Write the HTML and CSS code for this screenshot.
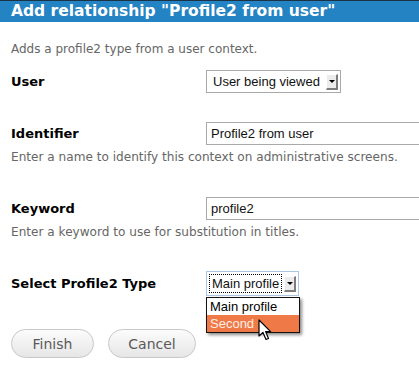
FILE: index.html
```html
<!DOCTYPE html>
<html>
<head>
<meta charset="utf-8">
<link rel="stylesheet" href="styles.css">
</head>
<body>
<div class="dialog">
  <h1 class="title">Add relationship "Profile2 from user"</h1>
  <div class="content">
    <p class="intro">Adds a profile2 type from a user context.</p>

    <div class="item item-user">
      <div class="row">
        <label class="label">User</label>
        <div class="select">
          <span class="select-text">User being viewed</span>
          <span class="arrow"></span>
        </div>
      </div>
    </div>

    <div class="item item-identifier">
      <div class="row">
        <label class="label">Identifier</label>
        <div class="textfield">Profile2 from user</div>
      </div>
      <p class="desc">Enter a name to identify this context on administrative screens.</p>
    </div>

    <div class="item item-keyword">
      <div class="row">
        <label class="label">Keyword</label>
        <div class="textfield">profile2</div>
      </div>
      <p class="desc">Enter a keyword to use for substitution in titles.</p>
    </div>

    <div class="item item-type">
      <div class="row">
        <label class="label">Select Profile2 Type</label>
        <div class="select-wrap">
          <div class="select select-focus">
            <span class="select-text"><span class="focus-ring">Main profile</span></span>
            <span class="arrow"></span>
          </div>
          <ul class="dropdown">
            <li class="option">Main profile</li>
            <li class="option option-hover">Second</li>
          </ul>
          <svg class="cursor" width="14" height="22" viewBox="0 0 14 22">
            <path d="M1 1 L1 17 L5 13.5 L8 20.5 L10.5 19.5 L7.6 12.6 L12.6 12.6 Z" fill="#fff" stroke="#000" stroke-width="1.2" stroke-linejoin="round"/>
          </svg>
        </div>
      </div>
    </div>

    <div class="actions">
      <button class="btn btn-finish">Finish</button>
      <button class="btn btn-cancel">Cancel</button>
    </div>
  </div>
</div>
</body>
</html>
```

FILE: styles.css
```css
html, body {
  margin: 0;
  padding: 0;
  background: #fff;
}
body {
  font-family: "DejaVu Sans", sans-serif;
  width: 419px;
  height: 375px;
  overflow: hidden;
}
.title {
  margin: 0;
  height: 21px;
  border-top: 1px solid #1c3346;
  background: #2383c3;
  color: #fff;
  font-family: "DejaVu Sans", sans-serif;
  font-weight: bold;
  font-size: 15.5px;
  line-height: 21px;
  padding-left: 11px;
  white-space: nowrap;
}
.content {
  padding-left: 11px;
}
.intro {
  margin: 0;
  padding-top: 20px;
  height: 14px;
  line-height: 14px;
  font-size: 12px;
  color: #666;
}
.item {
  margin: 0;
}
.row {
  display: flex;
  align-items: center;
}
.label {
  width: 195px;
  flex: none;
  font-weight: bold;
  font-size: 13px;
  color: #000;
}
.desc {
  margin: 0;
  font-size: 12.1px;
  line-height: 14px;
  color: #666;
  white-space: nowrap;
}
.item-user { margin-top: 14px; }
.item-identifier { margin-top: 29px; }
.item-identifier .desc { margin-top: 5px; }
.item-keyword { margin-top: 33px; }
.item-keyword .desc { margin-top: 5px; }
.item-type { margin-top: 32px; }

.select {
  position: relative;
  box-sizing: border-box;
  width: 135px;
  height: 23px;
  border: 1px solid #a9a9a9;
  background: #fff;
  display: flex;
  align-items: center;
  font-family: "Liberation Sans", Arial, sans-serif;
  font-size: 13px;
  color: #111;
  padding-left: 6px;
}
.select-text {
  flex: 1;
  white-space: nowrap;
}
.arrow {
  flex: none;
  width: 12px;
  height: 16px;
  margin-right: 2px;
  background: #ececec;
  border-right: 2px solid #7d7d7d;
  border-bottom: 2px solid #7d7d7d;
  border-top: 1px solid #fff;
  border-left: 1px solid #fff;
  box-sizing: border-box;
  position: relative;
}
.arrow::after {
  content: "";
  position: absolute;
  left: 2px;
  top: 5px;
  border-left: 3px solid transparent;
  border-right: 3px solid transparent;
  border-top: 3px solid #000;
}
.textfield {
  box-sizing: border-box;
  width: 230px;
  flex: none;
  height: 23px;
  border: 1px solid #a9a9a9;
  border-right: none;
  padding-left: 4px;
  display: flex;
  align-items: center;
  font-family: "Liberation Sans", Arial, sans-serif;
  font-size: 13px;
  color: #111;
}
.select-wrap {
  position: relative;
}
.select-focus {
  width: 93px;
  height: 25px;
  border: 1px solid #a9c7e3;
  padding-left: 2px;
}
.focus-ring {
  display: inline-block;
  border: 1px dotted #000;
  padding: 1px 2px;
}
.dropdown {
  position: absolute;
  left: 0;
  top: 26px;
  margin: 0;
  padding: 0;
  list-style: none;
  width: 94px;
  box-sizing: border-box;
  border: 1px solid #111;
  background: #fff;
  box-shadow: 2px 2px 3px rgba(0,0,0,0.45);
  font-family: "Liberation Sans", Arial, sans-serif;
  font-size: 13px;
}
.option {
  height: 17px;
  line-height: 17px;
  padding-left: 3px;
  color: #000;
}
.option-hover {
  background: #ef7a47;
  color: #ffeee6;
}
.cursor {
  position: absolute;
  left: 52px;
  top: 48px;
}
.actions {
  display: flex;
  gap: 14px;
  margin-top: 33px;
}
.btn {
  box-sizing: border-box;
  height: 29px;
  border: 1px solid #c8c8c8;
  border-radius: 15px;
  background: linear-gradient(#fcfcfc, #e6e6e6);
  font-family: "DejaVu Sans", sans-serif;
  font-size: 14px;
  color: #5a5a5a;
  padding: 0;
}
.btn-finish { width: 83px; }
.btn-cancel { width: 88px; }
```
